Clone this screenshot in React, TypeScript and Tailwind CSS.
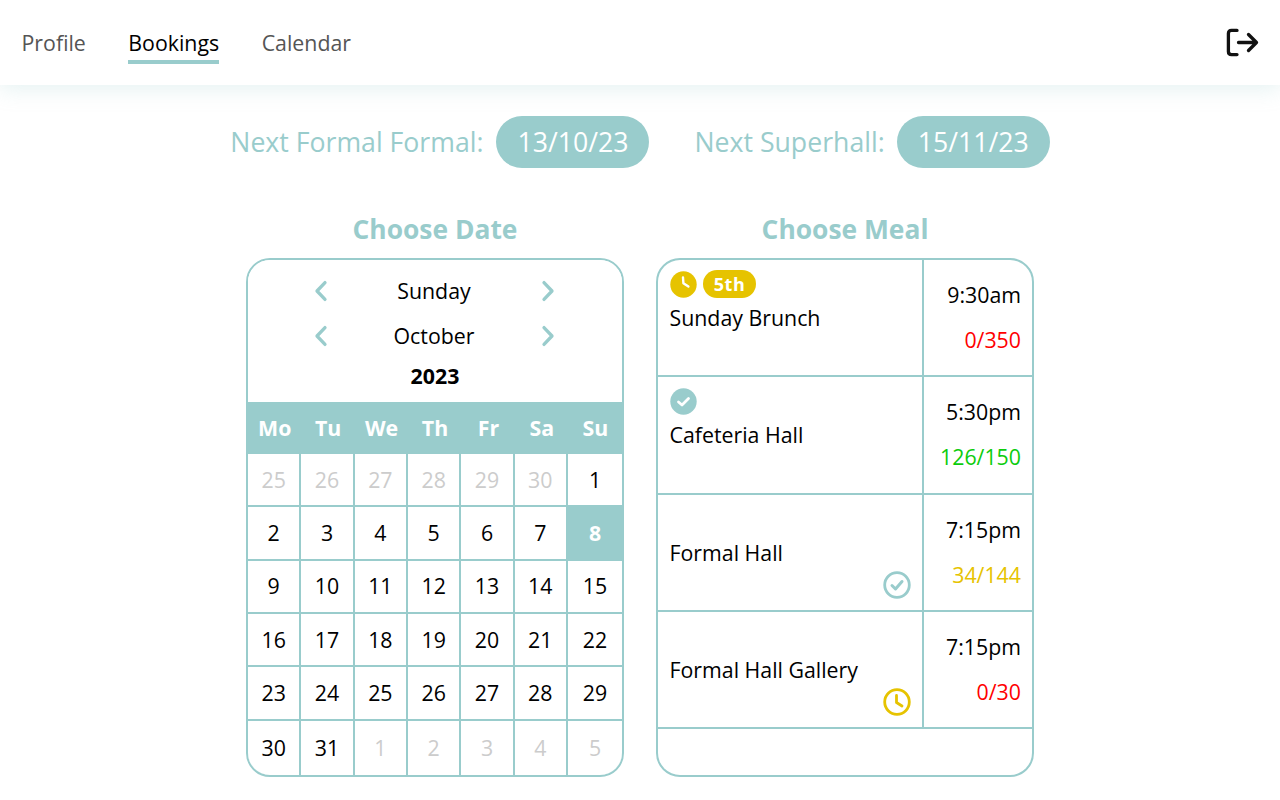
import React from "react";

const dayNames = ["Mo", "Tu", "We", "Th", "Fr", "Sa", "Su"];
const prev = [25, 26, 27, 28, 29, 30];
const days = Array.from({ length: 31 }, (_, i) => i + 1);
const next = [1, 2, 3, 4, 5];

function Chevron({ dir }: { dir: "l" | "r" }) {
  return (
    <svg width="14" height="22" viewBox="0 0 14 22" fill="none" stroke="#99cccc" strokeWidth="3.3" strokeLinecap="round" strokeLinejoin="round">
      <path d={dir === "l" ? "M11 2.6 L3 11 L11 19.4" : "M3 2.6 L11 11 L3 19.4"} />
    </svg>
  );
}

function Stepper({ label }: { label: string }) {
  return (
    <div className="flex items-center justify-center h-[45px] pr-[2px]">
      <Chevron dir="l" />
      <span className="w-[213px] text-center text-[21.33px] text-black">{label}</span>
      <Chevron dir="r" />
    </div>
  );
}

function ClockSolid() {
  return (
    <svg width="27" height="27" viewBox="0 0 27 27">
      <circle cx="13.5" cy="13.5" r="13.2" fill="#e6c300" />
      <path d="M13 6.5 L13.4 12.2 L18.4 15.6" fill="none" stroke="#fff" strokeWidth="2.4" strokeLinecap="round" strokeLinejoin="round" />
    </svg>
  );
}
function CheckSolid() {
  return (
    <svg width="27" height="27" viewBox="0 0 27 27">
      <circle cx="13.5" cy="13.5" r="13.2" fill="#99cccc" />
      <path d="M8.5 14 L12 17 L18.5 10.5" fill="none" stroke="#fff" strokeWidth="2.8" strokeLinecap="round" strokeLinejoin="round" />
    </svg>
  );
}
function CheckOutline() {
  return (
    <svg width="28" height="28" viewBox="0 0 28 28">
      <circle cx="14" cy="14" r="12.3" fill="none" stroke="#99cccc" strokeWidth="2.8" />
      <path d="M9 14.5 L12.5 18 L19 10.5" fill="none" stroke="#99cccc" strokeWidth="3" strokeLinecap="round" strokeLinejoin="round" />
    </svg>
  );
}
function ClockOutline() {
  return (
    <svg width="28" height="28" viewBox="0 0 28 28">
      <circle cx="14" cy="14" r="12.3" fill="none" stroke="#e6c300" strokeWidth="2.8" />
      <path d="M13.5 7.5 V14.5 L19 18" fill="none" stroke="#e6c300" strokeWidth="2.8" strokeLinecap="round" strokeLinejoin="round" />
    </svg>
  );
}

function Meal({ name, time, count, color, top, corner }: { name: string; time: string; count: string; color: string; top?: React.ReactNode; corner?: React.ReactNode }) {
  return (
    <div className="flex h-[115.3px] bg-white">
      <div className="relative w-[264px] pl-[11.5px] pt-[10px]">
        <div className="h-[28px] flex items-center gap-[6.5px]">{top}</div>
        <div className="text-[21.33px] leading-[29px] mt-[5px] text-black">{name}</div>
        {corner && <div className="absolute right-[11px] bottom-[11px]">{corner}</div>}
      </div>
      <div className="w-[2px] bg-[#99cccc]" />
      <div className="flex-1 pr-[11px] pt-[20px] text-right text-[21.33px] leading-[29px]">
        <div className="text-black">{time}</div>
        <div className={`mt-[16px] ${color}`}>{count}</div>
      </div>
    </div>
  );
}

export default function App() {
  const font = { fontFamily: '"Open Sans", sans-serif' };
  return (
    <div style={font} className="w-[1280px] h-[800px] bg-white overflow-hidden">
      <header className="relative h-[85px] flex items-center justify-between pl-[21.5px] pr-[21px] bg-white shadow-[0_4px_20px_rgba(153,204,204,0.25)]">
        <nav className="flex gap-[42.5px] text-[21.33px] text-[#555555]">
          <a className="h-[85px] flex items-center pt-[1px]">Profile</a>
          <a className="relative h-[85px] flex items-center pt-[1px] text-black">
            Bookings
            <span className="absolute left-0 right-0 top-[60px] h-[4px] bg-[#99cccc]" />
          </a>
          <a className="h-[85px] flex items-center pt-[1px]">Calendar</a>
        </nav>
        <svg width="33" height="29" viewBox="0 0 33 29" fill="none" stroke="#111" strokeWidth="3.3" strokeLinecap="round" strokeLinejoin="round">
          <path d="M11 2.4 H5.5 Q2.4 2.4 2.4 5.5 V23.5 Q2.4 26.6 5.5 26.6 H11" />
          <path d="M12.5 14.5 H30 M22.5 6.5 L30.5 14.5 L22.5 22.5" />
        </svg>
      </header>

      <div className="flex justify-center items-center mt-[31px] h-[52px] text-[26.67px] text-[#99cccc]">
        <span>Next Formal Formal:</span>
        <span className="ml-[13px] w-[153px] h-[52px] rounded-[26px] bg-[#99cccc] text-white flex items-center justify-center">13/10/23</span>
        <span className="ml-[45px]">Next Superhall:</span>
        <span className="ml-[12px] w-[153px] h-[52px] rounded-[26px] bg-[#99cccc] text-white flex items-center justify-center">15/11/23</span>
      </div>

      <div className="flex justify-center gap-[32px] mt-[41px]">
        <div className="w-[378px]">
          <h2 className="text-center text-[26.4px] font-bold text-[#99cccc] leading-[40px] h-[40px]">Choose Date</h2>
          <div className="h-[519px] border-2 border-[#99cccc] rounded-[24px] overflow-hidden flex flex-col mt-[9px]">
            <div className="h-[142px] pt-[8px] bg-white">
              <Stepper label="Sunday" />
              <Stepper label="October" />
              <div className="text-center text-[21.33px] font-bold text-black leading-[36px]">2023</div>
            </div>
            <div className="h-[52px] bg-[#99cccc] grid grid-cols-7 items-center text-white font-bold text-[21.33px] text-center">
              {dayNames.map((d) => (
                <div key={d}>{d}</div>
              ))}
            </div>
            <div className="flex-1 grid grid-cols-[repeat(6,51.33px)_1fr] grid-rows-[repeat(5,51.33px)_1fr] gap-[2px] bg-[#99cccc] text-[21.33px] text-center">
              {prev.map((d) => (
                <div key={`p${d}`} className="bg-white flex items-center justify-center text-[#cccccc]">{d}</div>
              ))}
              {days.map((d) => (
                <div key={d} className={d === 8 ? "bg-[#99cccc] flex items-center justify-center text-white font-bold" : "bg-white flex items-center justify-center text-black"}>{d}</div>
              ))}
              {next.map((d) => (
                <div key={`n${d}`} className="bg-white flex items-center justify-center text-[#cccccc]">{d}</div>
              ))}
            </div>
          </div>
        </div>

        <div className="w-[378px]">
          <h2 className="text-center text-[26.4px] font-bold text-[#99cccc] leading-[40px] h-[40px]">Choose Meal</h2>
          <div className="h-[519px] border-2 border-[#99cccc] rounded-[24px] overflow-hidden flex flex-col gap-[2px] bg-[#99cccc] mt-[9px]">
            <Meal
              name="Sunday Brunch"
              time="9:30am"
              count="0/350"
              color="text-[#ff0000]"
              top={
                <>
                  <ClockSolid />
                  <span className="h-[28px] w-[53px] rounded-full bg-[#e6c300] text-white font-bold text-[18px] flex items-center justify-center tracking-[0.5px]">5th</span>
                </>
              }
            />
            <Meal name="Cafeteria Hall" time="5:30pm" count="126/150" color="text-[#0ccc0c]" top={<CheckSolid />} />
            <Meal name="Formal Hall" time="7:15pm" count="34/144" color="text-[#e6c300]" corner={<CheckOutline />} />
            <Meal name="Formal Hall Gallery" time="7:15pm" count="0/30" color="text-[#ff0000]" corner={<ClockOutline />} />
            <div className="flex-1 bg-white" />
          </div>
        </div>
      </div>
    </div>
  );
}
